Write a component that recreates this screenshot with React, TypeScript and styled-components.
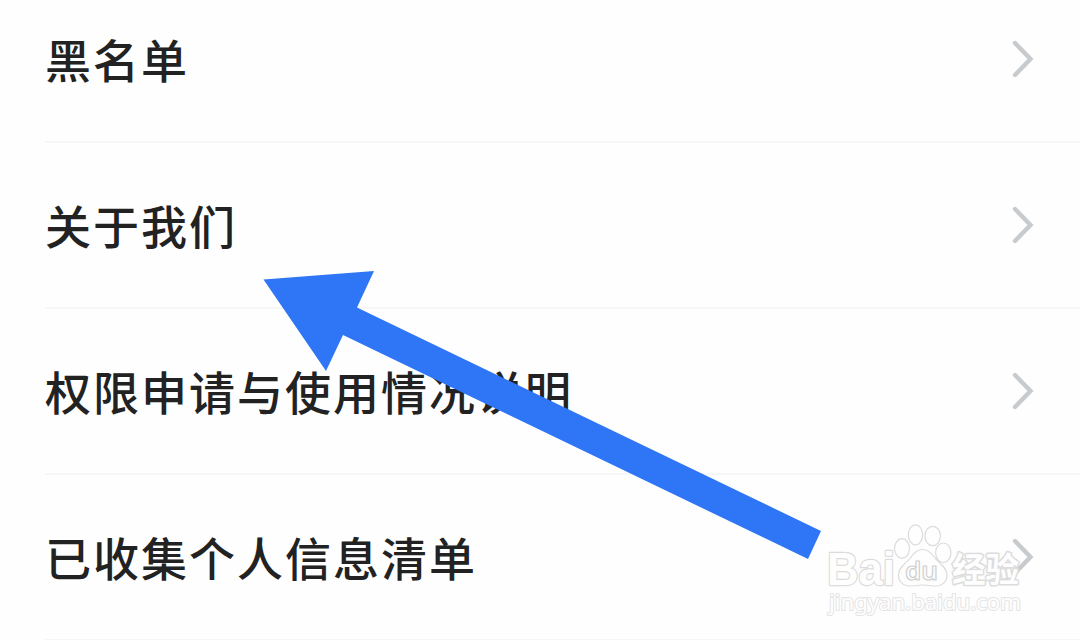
import React from 'react';
import styled, { createGlobalStyle } from 'styled-components';

const GlobalStyle = createGlobalStyle`
  body {
    margin: 0;
    background: #fefefe;
  }
`;

const Screen = styled.div`
  position: relative;
  width: 1080px;
  height: 640px;
  overflow: hidden;
  background: #fefefe;
  font-family: 'Noto Sans CJK SC', sans-serif;
`;

const List = styled.div`
  display: flex;
  flex-direction: column;
  margin-top: -23px;
`;

const Row = styled.div`
  display: flex;
  align-items: center;
  justify-content: space-between;
  box-sizing: border-box;
  height: 166px;
  margin-left: 45px;
  padding-right: 45px;
  border-bottom: 2px solid #f6f6f6;
`;

const Label = styled.div`
  padding-bottom: 2px;
  font-size: 46px;
  font-weight: 500;
  line-height: 60px;
  letter-spacing: 2px;
  color: #222;
  white-space: nowrap;
`;

const Chevron = styled.svg`
  display: block;
  width: 24px;
  height: 40px;
  fill: none;
  stroke: #c8cbce;
  stroke-width: 4.4;
  stroke-linecap: round;
`;

const Overlay = styled.svg`
  position: absolute;
  top: 0;
  left: 0;
  width: 1080px;
  height: 640px;
`;

const Logo = styled.g`
  fill: #fefefe;
  stroke: #dcdcdc;
  stroke-width: 1.2;
  stroke-linejoin: round;
`;

const BrandText = styled.text`
  font-family: 'Liberation Sans', sans-serif;
  font-size: 46px;
  font-weight: 700;
  stroke-width: 2.4;
  paint-order: stroke;
`;

const PawText = styled.text`
  font-family: 'Noto Sans', sans-serif;
  font-size: 26px;
  font-weight: 600;
  stroke: #cfcfcf;
  stroke-width: 1.2;
`;

const SuffixText = styled.text`
  font-family: 'Noto Sans CJK SC', sans-serif;
  font-size: 34px;
  font-weight: 700;
  stroke-width: 3;
  paint-order: stroke;
`;

const UrlText = styled.text`
  font-family: 'Noto Sans', sans-serif;
  font-size: 22px;
  font-weight: 400;
  stroke: #e4e4e4;
  stroke-width: 2;
  paint-order: stroke;
`;

const items = ['黑名单', '关于我们', '权限申请与使用情况说明', '已收集个人信息清单'];

const Watermark: React.FC = () => (
  <Logo>
    <BrandText x="827" y="585" textLength="68" lengthAdjust="spacingAndGlyphs">Bai</BrandText>
    <ellipse cx="902" cy="548.5" rx="7.5" ry="9.8" />
    <ellipse cx="915.5" cy="534.8" rx="7.2" ry="10" />
    <ellipse cx="932.7" cy="536" rx="7.8" ry="9.6" />
    <ellipse cx="943.3" cy="552.8" rx="7.7" ry="9.8" />
    <path d="M922.500 549.500c-6 0-9.500 4.500-12.500 9-4 5-11.500 8.500-11.500 16.500 0 7 5 11 11 11 5 0 9-1 13.500-1s8 1 13 1c6 0 11-4 11-11 0-7.500-7-11-11.500-16.500-3.500-5-7-9-13-9z" />
    <PawText x="905" y="580" textLength="33" lengthAdjust="spacingAndGlyphs">du</PawText>
    <SuffixText x="952" y="582" textLength="67" lengthAdjust="spacingAndGlyphs">经验</SuffixText>
    <UrlText x="829" y="610" textLength="192" lengthAdjust="spacingAndGlyphs">jingyan.baidu.com</UrlText>
  </Logo>
);

const App: React.FC = () => {
  return (
    <>
      <GlobalStyle />
      <Screen>
        <List>
          {items.map((item) => (
            <Row key={item}>
              <Label>{item}</Label>
              <Chevron viewBox="0 0 24 40">
                <path d="M4 4l15.500 16L4 36" />
              </Chevron>
            </Row>
          ))}
        </List>
        <Overlay viewBox="0 0 1080 640">
          <polygon fill="#2f76f6" points="263.500,279.500 374,271 357,307.500 821,531 808,559 343,335 326,371" />
          <Watermark />
        </Overlay>
      </Screen>
    </>
  );
};

export default App;
